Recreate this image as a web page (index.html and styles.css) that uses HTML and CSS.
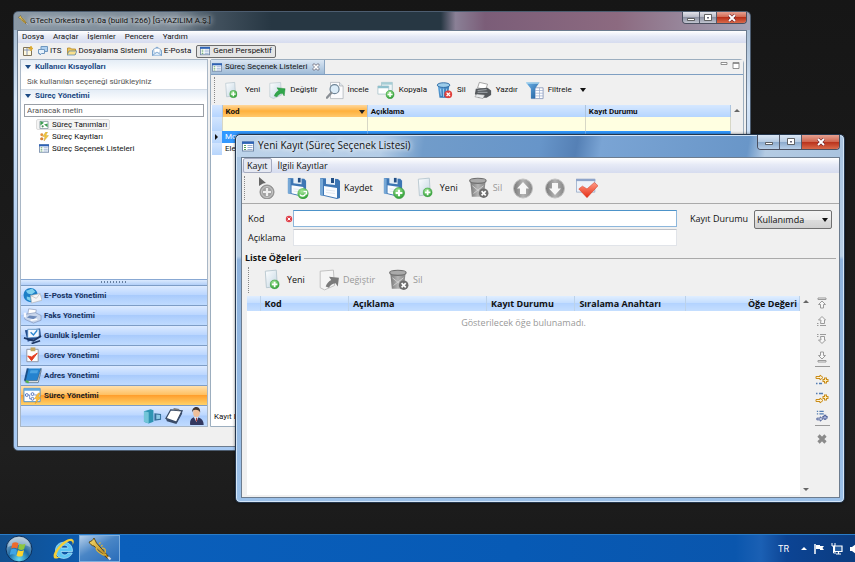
FILE: index.html
```html
<!DOCTYPE html>
<html lang="tr">
<head>
<meta charset="utf-8">
<title>GTech Orkestra</title>
<link rel="stylesheet" href="styles.css">
</head>
<body>
<svg class="defs" aria-hidden="true">
  <defs>
    <linearGradient id="gPage" x1="0" y1="0" x2="1" y2="1"><stop offset="0" stop-color="#fdfeff"/><stop offset="1" stop-color="#c3d6e2"/></linearGradient>
    <linearGradient id="gBlue" x1="0" y1="0" x2="1" y2="1"><stop offset="0" stop-color="#6db3e8"/><stop offset="1" stop-color="#1c5b9c"/></linearGradient>
    <linearGradient id="gGrey" x1="0" y1="0" x2="1" y2="0"><stop offset="0" stop-color="#777"/><stop offset=".5" stop-color="#b4b4b4"/><stop offset="1" stop-color="#858585"/></linearGradient>
    <linearGradient id="gRed" x1="0" y1="0" x2="0" y2="1"><stop offset="0" stop-color="#ff9a85"/><stop offset="1" stop-color="#e62e14"/></linearGradient>
    <linearGradient id="gGold" x1="0" y1="0" x2="1" y2="1"><stop offset="0" stop-color="#f7dc6a"/><stop offset="1" stop-color="#a87410"/></linearGradient>
    <radialGradient id="gGreen" cx=".4" cy=".3" r=".7"><stop offset="0" stop-color="#a6e89a"/><stop offset="1" stop-color="#2f9f35"/></radialGradient>
    <radialGradient id="gOrb" cx=".5" cy=".9" r=".9"><stop offset="0" stop-color="#64dcf5"/><stop offset=".45" stop-color="#1c69a4"/><stop offset="1" stop-color="#a9bfd0"/></radialGradient>
  </defs>
  <symbol id="plus" viewBox="0 0 10 10"><circle cx="5" cy="5" r="4.6" fill="url(#gGreen)" stroke="#3f9e46" stroke-width=".6"/><path d="M5 2.2v5.6M2.2 5h5.6" stroke="#fff" stroke-width="1.7"/></symbol>
  <symbol id="cross" viewBox="0 0 10 10"><circle cx="5" cy="5" r="4.6" fill="#e1403c"/><path d="M3 3l4 4M7 3l-4 4" stroke="#fff" stroke-width="1.6"/></symbol>
  <symbol id="crossGrey" viewBox="0 0 10 10"><circle cx="5" cy="5" r="4.6" fill="#6e6e6e"/><path d="M3 3l4 4M7 3l-4 4" stroke="#fff" stroke-width="1.6"/></symbol>
  <symbol id="trumpet" viewBox="0 0 24 24"><path d="M1 5C4 4 5 3 6 1l2.500 5L21 20l-1.500 1.500L6 9C4 9 2 7 1 5z" fill="url(#gGold)" stroke="#4a3508" stroke-width=".8"/><path d="M9 9c-2 3 0 5 3 7s5 3 6 1M11 7l1.500-1.500M13 9.500l1.500-1.500M14 11c3 0 4 2 3 5" fill="none" stroke="#d8b03a" stroke-width="1.400"/><path d="M20 20l2.500 2.500" stroke="#d9d9d9" stroke-width="2.2"/></symbol>
  <symbol id="list" viewBox="0 0 12 10"><rect x=".5" y=".5" width="11" height="9" fill="#fff" stroke="#7289a8"/><path d="M0 0h12v2.4H0z" fill="#2d62b5"/><path d="M2 4h2M2 6h2M2 8h2" stroke="#58a05b"/><path d="M5.5 4h5M5.5 6h5M5.5 8h5" stroke="#8da6cf" stroke-width=".9"/></symbol>
  <symbol id="newdoc" viewBox="0 0 20 20"><path d="M3 2l10-1 1 15-10 1z" fill="url(#gPage)" stroke="#adbfc9" stroke-width=".7"/><use href="#plus" x="7" y="9.500" width="9" height="9"/></symbol>
  <symbol id="edit" viewBox="0 0 20 20"><path d="M2 2l12-1 1 14-9 4-4-2z" fill="url(#gPage)" stroke="#b7c5cc" stroke-width=".7"/><path d="M7 16c1-3 3-5 5-6l-2-3 9 1-1 8-2-3c-3 0-5 2-6 4z" fill="#31a64b" stroke="#208b38" stroke-width=".5"/></symbol>
  <symbol id="editGrey" viewBox="0 0 20 20"><path d="M2 2l12-1 1 14-9 4-4-2z" fill="#f5f5f5" stroke="#bbb" stroke-width=".8"/><path d="M7 16c1-3 3-5 5-6l-2-3 9 1-1 8-2-3c-3 0-5 2-6 4z" fill="#7b7b7b"/></symbol>
  <symbol id="inspect" viewBox="0 0 20 20"><path d="M5 1h10l4 4v14H5z" fill="#fbfbfd" stroke="#aab0b7" stroke-width=".8"/><path d="M15 1v4h4" fill="#dfe5ec" stroke="#999" stroke-width=".6"/><circle cx="9.500" cy="8.500" r="5" fill="#dcecf8" stroke="#6e8497" stroke-width="1.3"/><path d="M6 12.500L1 18" stroke="#8a8f95" stroke-width="2.6" stroke-linecap="round"/></symbol>
  <symbol id="copy" viewBox="0 0 20 20"><path d="M5 1h12v9H5z" fill="#eef5f7" stroke="#9cbcc5" stroke-width=".8"/><path d="M5 1h12v2.500H5z" fill="#a5cdd5"/><path d="M1 5h12v9H1z" fill="#fff" stroke="#a0bec6" stroke-width=".8"/><path d="M1 5h12v2.500H1z" fill="#8fc1cd"/><use href="#plus" x="9.500" y="9.500" width="10" height="10"/></symbol>
  <symbol id="trash" viewBox="0 0 20 20"><path d="M3 4h13l-2 14H5z" fill="url(#gBlue)"/><ellipse cx="9.500" cy="4" rx="7" ry="2.600" fill="#9cccea" stroke="#2a68a2"/><path d="M6 8l1 8M9.500 8v9M13 8l-1 8" stroke="#a9d5f3"/><use href="#cross" x="10" y="9.500" width="9.500" height="9.500"/></symbol>
  <symbol id="trashGrey" viewBox="0 0 20 20"><path d="M2 3h14l-1.500 15h-11z" fill="url(#gGrey)"/><ellipse cx="9" cy="3.500" rx="7.500" ry="2.300" fill="#aaa" stroke="#707070"/><path d="M4 8l10 8M14 8L5 15" stroke="#d5d5d5" stroke-width=".8"/><use href="#crossGrey" x="9.500" y="10" width="9.500" height="9.500"/></symbol>
  <symbol id="print" viewBox="0 0 20 20"><path d="M6 1l9 2-2 6-9-2z" fill="#fff" stroke="#777" stroke-width=".7"/><path d="M2 8l13-1 4 3v5l-5 3H5l-4-4z" fill="#55595d"/><path d="M4 10l10-1M4 12h11" stroke="#aeb3b8"/><path d="M3 14l9 1-2 4-9-2z" fill="#e6e8ea" stroke="#777" stroke-width=".5"/></symbol>
  <symbol id="filter" viewBox="0 0 20 20"><path d="M6 7h13v12H6z" fill="#fff" stroke="#8f9ebd"/><path d="M6 10h13M6 13h13M6 16h13M10.500 7v12M15 7v12" stroke="#9badd0" stroke-width=".8"/><path d="M0 1h15l-5 7v11H5.500V8z" fill="url(#gBlue)"/><path d="M0 1h15l-1 1.500H1z" fill="#a6d5ee"/></symbol>
  <symbol id="floppy" viewBox="0 0 22 22"><path d="M1 1l18 1 2 2v17l-3 1-17-4z" fill="#3d76b4"/><path d="M1 1l3 1v17l-3-1z" fill="#77a8d6"/><path d="M7 1h9v7l-9-1z" fill="#e6eff8"/><path d="M12 1h3v5h-3z" fill="#234e83"/><path d="M5 9l13 2v10L5 18z" fill="#fafcff"/><path d="M7 13l9 1M7 15.500l9 1" stroke="#d3dce8" stroke-width=".7"/></symbol>
  <symbol id="saveRefresh" viewBox="0 0 22 22"><use href="#floppy" width="20" height="20"/><circle cx="16" cy="16.500" r="5.500" fill="url(#gGreen)"/><path d="M13 17.500c1 2.500 5 2 5.500-1M19.500 17.500v-3h-3" stroke="#fff" stroke-width="1.500" fill="none"/></symbol>
  <symbol id="saveNew" viewBox="0 0 22 22"><use href="#floppy" width="20" height="20"/><use href="#plus" x="10" y="10" width="12" height="12"/></symbol>
  <symbol id="pick" viewBox="0 0 22 22"><path d="M4 0l7 6-3 .5L4 9z" fill="#666"/><circle cx="12" cy="15" r="7" fill="#a2a2a2" stroke="#8b8b8b"/><circle cx="12" cy="15" r="5.500" fill="none" stroke="#d5d5d5" stroke-width=".7"/><path d="M12 11v8M8 15h8" stroke="#eee" stroke-width="2.200"/></symbol>
  <symbol id="up" viewBox="0 0 22 22"><circle cx="11" cy="11.500" r="9.500" fill="url(#gGrey)" stroke="#c2c2c2"/><path d="M11 5l6 6.500h-3V17H8v-5.500H5z" fill="#f7f7f7"/></symbol>
  <symbol id="down" viewBox="0 0 22 22"><circle cx="11" cy="11.500" r="9.500" fill="url(#gGrey)" stroke="#c2c2c2"/><path d="M11 18l6-6.500h-3V6H8v5.500H5z" fill="#f7f7f7"/></symbol>
  <symbol id="confirm" viewBox="0 0 24 22"><path d="M.5 1.500h20v14H.5z" fill="#eef3fa" stroke="#9fb0cc"/><path d="M0 1h21v2.500H0z" fill="#8fa5ca"/><path d="M3 12l4-3 5 3 8-7 4 3.500L12 21.500z" fill="url(#gRed)" stroke="#d73a22" stroke-width=".6"/></symbol>
  <symbol id="globe" viewBox="0 0 20 16"><circle cx="8" cy="7.500" r="7.500" fill="#1c7fc6"/><path d="M3 3c3 0 4-2 7-2l3 3-4 3-4-1zM4 9l4 1v4l-4-2z" fill="#7fd0ef"/><path d="M8 8l10-2 2 7-11 3z" fill="#f4f5f7" stroke="#aaa" stroke-width=".6"/><path d="M8 8l6 3 4-5" stroke="#aaa" stroke-width=".6" fill="none"/></symbol>
  <symbol id="fax" viewBox="0 0 20 16"><path d="M6 1l8 1-1 5H5z" fill="#fff" stroke="#8796b6" stroke-width=".7"/><path d="M1 7l12-2 6 3v5l-8 3-9-4z" fill="#c8d6ec" stroke="#7d91b8" stroke-width=".7"/><path d="M7 8l8 1-4 3-7-2z" fill="#6e8bbb"/><path d="M2 5v5" stroke="#f7f9ff" stroke-width="2.500"/><path d="M8 13l7-1" stroke="#fff" stroke-width="1.500"/></symbol>
  <symbol id="agenda" viewBox="0 0 20 17"><path d="M2 3l16-2 1 9-14 5z" fill="#274e8c"/><path d="M5 2h12v8l-12 1z" fill="#f5faff" stroke="#4684bf" stroke-width=".7"/><path d="M8 5l3 3 4-5" stroke="#2b87d0" stroke-width="1.400" fill="none"/><path d="M1 11l10 3 8-5M9 17l9-3" stroke="#1c3765" stroke-width="1.800" fill="none"/></symbol>
  <symbol id="task" viewBox="0 0 20 17"><path d="M4 2h12v13H4z" fill="#fdfdfd" stroke="#8b96a8"/><path d="M8 0h5v4H8z" fill="#c3a75f"/><path d="M5 9l4 5 6-8-6 4z" fill="#e43d22" stroke="#e43d22"/></symbol>
  <symbol id="book" viewBox="0 0 20 17"><path d="M5 1l14 0-4 13H2z" fill="#2583cf"/><path d="M2 14l13 0 4-13v3l-3 12H3z" fill="#f2f2f2" stroke="#38546d" stroke-width=".7"/><path d="M8 3h8l-1 3H7z" fill="#4ba3e2"/><path d="M5 1L2 14" stroke="#194f88" stroke-width="2"/><path d="M3 14l3 2" stroke="#50b848" stroke-width="2"/></symbol>
  <symbol id="process" viewBox="0 0 20 17"><path d="M1 1h17v14H1z" fill="#fff" stroke="#4d8fc9"/><path d="M1 1h17v2.500H1z" fill="#64a9dc"/><circle cx="4" cy="8" r="1.500" fill="none" stroke="#5172bb"/><circle cx="10" cy="7" r="1.500" fill="none" stroke="#5172bb"/><circle cx="10" cy="12" r="1.500" fill="none" stroke="#5172bb"/><path d="M5.500 8H7v4h1.500M12 8h3" stroke="#5172bb" stroke-width=".8" fill="none"/><path d="M16 6l-4 6h2.500L13 17l6-7h-3l2-4z" fill="#f9bd37" stroke="#d8941b" stroke-width=".5"/></symbol>
  <symbol id="server" viewBox="0 0 20 16"><path d="M1 3l7-2 3 1v12l-5 2-5-2z" fill="#2f95b3"/><path d="M1 3l5 1v12l-5-2z" fill="#73c5d8"/><path d="M12 5l7 1v6l-7 1z" fill="#356e98"/><path d="M14 6.500l4 .5v4l-4 .5z" fill="#8ec9e4"/></symbol>
  <symbol id="pad" viewBox="0 0 20 17"><path d="M6 2l12 1-6 12-11-4z" fill="#fff" stroke="#394b66" stroke-width="1.300"/><path d="M1 11l11 4 6-12v3l-6 11-10-3z" fill="#3a4c69"/><path d="M9 1l6 1" stroke="#777" stroke-width="2"/></symbol>
  <symbol id="person" viewBox="0 0 18 20"><path d="M2 20c-1-6 2-9 6-9s9 2 9 9z" fill="#323860"/><path d="M6 11l3 6 2-6z" fill="#dce6f2"/><path d="M9 12v4" stroke="#b13a34" stroke-width="1.200"/><ellipse cx="9" cy="6.500" rx="3.700" ry="4.700" fill="#efbf99"/><path d="M4 6c0-8 10-8 9 0-1-2-2-3-5-3s-3 1-4 3z" fill="#44362e"/></symbol>
  <symbol id="grid" viewBox="0 0 10 10"><path d="M.5 1.500h8v8h-8z" fill="#fff9df" stroke="#80745a"/><path d="M1 4h8M4 2v7" stroke="#8594b5"/><path d="M8 0v5M5.500 2.500h4.500" stroke="#e1ad2e" stroke-width="1.500"/></symbol>
  <symbol id="talk" viewBox="0 0 10 10"><path d="M3 .5h6.500v5H3z" fill="#aed0f0" stroke="#6f97bf"/><path d="M.5 3.500h6v4h-3L2 9V7.500H.5z" fill="#e7f2fc" stroke="#6f97bf"/></symbol>
  <symbol id="folder" viewBox="0 0 10 10"><path d="M.5 8.500V2h3l1 1h4v5.500z" fill="#ecc65c" stroke="#b58522" stroke-width=".8"/><path d="M2 5h8L8 9H0z" fill="#f9df8c" stroke="#4c81b8" stroke-width=".7"/></symbol>
  <symbol id="mail" viewBox="0 0 10 10"><path d="M.5 4.500L5 1l4.500 3.500v5h-9z" fill="#cfe3f6" stroke="#6292c3" stroke-width=".8"/><path d="M2 2.500h6V6L5 8 2 6z" fill="#fff" stroke="#8baacb" stroke-width=".5"/><path d="M.5 9.500L5 6l4.500 3.500" fill="#dcebf9" stroke="#6292c3" stroke-width=".7"/></symbol>
  <symbol id="define" viewBox="0 0 10 10"><path d="M.5 1.500h9v8h-9z" fill="#fff" stroke="#8da0a8"/><path d="M1 1l4 2-4 3zM5 5l4-1v4z" fill="#3a9e50"/><circle cx="3.500" cy="7" r="1.200" fill="#4b8d5b"/></symbol>
  <symbol id="records" viewBox="0 0 10 10"><circle cx="2.500" cy="3" r="1.600" fill="#e59139"/><circle cx="2.500" cy="7.500" r="1.800" fill="#d98236"/><path d="M7 0L3.500 5H6L5 10l5-6H7l2-4z" fill="#f3c73c" stroke="#b8902b" stroke-width=".4"/></symbol>
  <symbol id="toTop" viewBox="0 0 12 12"><path d="M2 1h8v1.500H2z"/><path d="M6 4l3.500 3.500h-2V11h-3V7.500h-2z"/></symbol>
  <symbol id="stepUp" viewBox="0 0 12 12"><path d="M6 1.500l3.500 3.500H8.500v3.500h-4L5 5H2.500z"/><path d="M1 10.500h1.500M4 10.500h6M1 8.500h1.500"/></symbol>
  <symbol id="addAbove" viewBox="0 0 14 12"><path d="M1 2.500h4V1l3 2.500L5 6V4.500H1z" fill="#fff3d5" stroke="#ca8c18"/><path d="M10.500 3.500v6M7.500 6.500h6" stroke="#ca8c18" stroke-width="3"/><path d="M10.500 4.500v4M8.500 6.500h4" stroke="#fff0c0"/><path d="M1 9.500h1.500M4 9.500h3" stroke="#537db3" stroke-width="1.500"/></symbol>
  <symbol id="addBelow" viewBox="0 0 14 12"><path d="M1 1.500h1.500M4 1.500h4" stroke="#537db3" stroke-width="1.500"/><path d="M1 7.500h4V6l3 2.500L5 11V9.500H1z" fill="#fff3d5" stroke="#ca8c18"/><path d="M10.500 2.500v6M7.500 5.500h6" stroke="#ca8c18" stroke-width="3"/><path d="M10.500 3.500v4M8.500 5.500h4" stroke="#fff0c0"/></symbol>
  <symbol id="addEnd" viewBox="0 0 14 14"><path d="M1 1.500h1.500M4 1.500h5M1 4.500h1.500M4 4.500h5" stroke="#537db3" stroke-width="1.500"/><path d="M1 9.500h4V8l3 2.500L5 13v-1.500H1z" fill="#e4e9fa" stroke="#40548f"/><path d="M10.500 5.500v6M7.500 8.500h6" stroke="#40548f" stroke-width="3"/><path d="M10.500 6.500v4M8.500 8.500h4" stroke="#c3cdf0"/></symbol>
</svg>

<main class="desktop">
  <section class="window main-window" aria-label="GTech Orkestra">
    <header class="titlebar">
      <svg class="app-icon"><use href="#trumpet"/></svg>
      <h1>GTech Orkestra v1.0a (build 1266) [G-YAZILIM A.Ş.]</h1>
      <div class="caption">
        <button aria-label="Simge durumuna küçült"><svg viewBox="0 0 12 10"><path d="M2.500 5.500h7v2h-7z" fill="#fff" stroke="#444" stroke-width=".8"/></svg></button>
        <button aria-label="Ekranı kapla"><svg viewBox="0 0 12 10"><path d="M2.500 1.500h7v6h-7z" fill="#fff" stroke="#444" stroke-width=".8"/><path d="M5 4h2v1.500H5z" fill="#667"/></svg></button>
        <button class="close" aria-label="Kapat"><svg viewBox="0 0 12 10"><path d="M3 2l6 6M9 2L3 8" stroke="#512" stroke-width="3"/><path d="M3 2l6 6M9 2L3 8" stroke="#fff" stroke-width="2"/></svg></button>
      </div>
    </header>
    <div class="client">
      <nav class="menubar"><a href="#">Dosya</a><a href="#">Araçlar</a><a href="#">İşlemler</a><a href="#">Pencere</a><a href="#">Yardım</a></nav>
      <div class="perspectives">
        <button aria-label="Perspektif aç"><svg><use href="#grid"/></svg></button>
        <button><svg><use href="#talk"/></svg>ITS</button>
        <button><svg><use href="#folder"/></svg>Dosyalama Sistemi</button>
        <button><svg><use href="#mail"/></svg>E-Posta</button>
        <button class="pressed"><svg><use href="#list"/></svg>Genel Perspektif</button>
      </div>
      <div class="workspace">
        <aside class="sidebar">
          <h2>Kullanıcı Kısayolları</h2>
          <p class="hint">Sık kullanılan seçeneği sürükleyiniz</p>
          <h2>Süreç Yönetimi</h2>
          <input class="search" type="text" aria-label="Aranacak metin" placeholder="Aranacak metin">
          <ul class="tree">
            <li><a class="current" href="#"><svg><use href="#define"/></svg>Süreç Tanımları</a></li>
            <li><a href="#"><svg><use href="#records"/></svg>Süreç Kayıtları</a></li>
            <li><a href="#"><svg><use href="#list"/></svg>Süreç Seçenek Listeleri</a></li>
          </ul>
          <div class="sash"></div>
          <nav class="stack">
            <button><svg><use href="#globe"/></svg>E-Posta Yönetimi</button>
            <button><svg><use href="#fax"/></svg>Faks Yönetimi</button>
            <button><svg><use href="#agenda"/></svg>Günlük İşlemler</button>
            <button><svg><use href="#task"/></svg>Görev Yönetimi</button>
            <button><svg><use href="#book"/></svg>Adres Yönetimi</button>
            <button class="active"><svg><use href="#process"/></svg>Süreç Yönetimi</button>
          </nav>
          <div class="shortcuts">
            <button aria-label="Sunucu"><svg><use href="#server"/></svg></button>
            <button aria-label="Notlar"><svg><use href="#pad"/></svg></button>
            <button aria-label="Kullanıcı"><svg><use href="#person"/></svg></button>
          </div>
        </aside>
        <section class="editor">
          <div class="tabs">
            <button class="tab"><svg><use href="#list"/></svg>Süreç Seçenek Listeleri<svg class="tab-close" viewBox="0 0 8 8"><path d="M1 1h2l1 1.500L5 1h2v1.500L5.500 4 7 5.500V7H5L4 5.500 3 7H1V5.500L2.500 4 1 2.500z" fill="#fff" stroke="#667" stroke-width=".7"/></svg></button>
            <div class="view-tools"><button aria-label="Küçült"><svg viewBox="0 0 8 8"><path d="M1 1.500h6v2H1z" fill="#fff" stroke="#777" stroke-width=".8"/></svg></button><button aria-label="Büyüt"><svg viewBox="0 0 8 8"><path d="M1 1.500h6v6H1zM1 2.500h6" fill="#fff" stroke="#777" stroke-width=".8"/></svg></button></div>
          </div>
          <div class="toolbar">
            <button><svg><use href="#newdoc"/></svg>Yeni</button>
            <button><svg><use href="#edit"/></svg>Değiştir</button>
            <button><svg><use href="#inspect"/></svg>İncele</button>
            <button><svg><use href="#copy"/></svg>Kopyala</button>
            <button><svg><use href="#trash"/></svg>Sil</button>
            <button><svg><use href="#print"/></svg>Yazdır</button>
            <button><svg><use href="#filter"/></svg>Filtrele<i class="arrow"></i></button>
          </div>
          <div class="grid-area">
            <table class="records">
              <colgroup><col class="marker"><col class="c-code"><col><col class="c-state"></colgroup>
              <thead><tr><th></th><th class="sorted">Kod</th><th>Açıklama</th><th>Kayıt Durumu</th></tr></thead>
              <tbody>
                <tr class="filter-row"><td></td><td></td><td></td><td></td></tr>
                <tr class="selected"><td><i class="pointer"></i></td><td>Model</td><td></td><td></td></tr>
                <tr><td></td><td>Eleme</td><td></td><td></td></tr>
              </tbody>
            </table>
            <div class="scroll"><i class="tri-up"></i></div>
          </div>
          <p class="count">Kayıt Listesi</p>
        </section>
      </div>
    </div>
  </section>

  <section class="window dialog" role="dialog" aria-label="Yeni Kayıt">
    <header class="titlebar">
      <svg class="app-icon"><use href="#list"/></svg>
      <h1>Yeni Kayıt (Süreç Seçenek Listesi)</h1>
      <div class="caption">
        <button aria-label="Simge durumuna küçült"><svg viewBox="0 0 12 10"><path d="M2.500 5.500h7v2h-7z" fill="#fff" stroke="#444" stroke-width=".8"/></svg></button>
        <button aria-label="Ekranı kapla"><svg viewBox="0 0 12 10"><path d="M2.500 1.500h7v6h-7z" fill="#fff" stroke="#444" stroke-width=".8"/><path d="M5 4h2v1.500H5z" fill="#667"/></svg></button>
        <button class="close" aria-label="Kapat"><svg viewBox="0 0 12 10"><path d="M3 2l6 6M9 2L3 8" stroke="#512" stroke-width="3"/><path d="M3 2l6 6M9 2L3 8" stroke="#fff" stroke-width="2"/></svg></button>
      </div>
    </header>
    <div class="client">
      <nav class="menubar"><a class="open" href="#">Kayıt</a><a href="#">İlgili Kayıtlar</a></nav>
      <div class="toolbar">
        <button aria-label="Seç"><svg><use href="#pick"/></svg></button>
        <button aria-label="Kaydet ve yenile"><svg><use href="#saveRefresh"/></svg></button>
        <button><svg><use href="#floppy"/></svg>Kaydet</button>
        <button aria-label="Kaydet ve yeni"><svg><use href="#saveNew"/></svg></button>
        <button><svg><use href="#newdoc"/></svg>Yeni</button>
        <button disabled><svg><use href="#trashGrey"/></svg>Sil</button>
        <button aria-label="Önceki"><svg><use href="#up"/></svg></button>
        <button aria-label="Sonraki"><svg><use href="#down"/></svg></button>
        <button aria-label="Onayla"><svg><use href="#confirm"/></svg></button>
      </div>
      <form class="form">
        <label for="kod">Kod</label>
        <svg class="error" viewBox="0 0 8 8"><circle cx="4" cy="4" r="3.200" fill="#e0424c"/><path d="M2.600 2.600l2.800 2.800M5.400 2.600L2.600 5.400" stroke="#fff"/></svg>
        <input id="kod" class="focused" type="text">
        <label class="state-label" for="durum">Kayıt Durumu</label>
        <span class="select"><select id="durum"><option>Kullanımda</option></select><i class="arrow"></i></span>
        <label for="aciklama">Açıklama</label>
        <input id="aciklama" class="second" type="text">
      </form>
      <h2 class="group">Liste Öğeleri</h2>
      <div class="toolbar items-tools">
        <button><svg><use href="#newdoc"/></svg>Yeni</button>
        <button disabled><svg><use href="#editGrey"/></svg>Değiştir</button>
        <button disabled><svg><use href="#trashGrey"/></svg>Sil</button>
      </div>
      <div class="items">
        <div class="items-list">
          <table>
            <colgroup><col class="i-mark"><col class="i-code"><col class="i-desc"><col class="i-state"><col class="i-sort"><col></colgroup>
            <thead><tr><th></th><th>Kod</th><th>Açıklama</th><th>Kayıt Durumu</th><th>Sıralama Anahtarı</th><th class="num">Öğe Değeri</th></tr></thead>
          </table>
          <p class="empty">Gösterilecek öğe bulunamadı.</p>
        </div>
        <div class="scroll"><i class="tri-up"></i><i class="tri-down"></i></div>
        <div class="side-tools">
          <button aria-label="En üste taşı"><svg class="outline"><use href="#toTop"/></svg></button>
          <button aria-label="Yukarı taşı"><svg class="outline"><use href="#stepUp"/></svg></button>
          <button aria-label="Aşağı taşı"><svg class="outline flip"><use href="#stepUp"/></svg></button>
          <button aria-label="En alta taşı"><svg class="outline flip"><use href="#toTop"/></svg></button>
          <hr>
          <button aria-label="Üste ekle"><svg><use href="#addAbove"/></svg></button>
          <button aria-label="Alta ekle"><svg><use href="#addBelow"/></svg></button>
          <button aria-label="Sona ekle"><svg><use href="#addEnd"/></svg></button>
          <hr>
          <button aria-label="Kaldır"><svg viewBox="0 0 12 12"><path d="M2.500 2.500l7 7M9.500 2.500l-7 7" stroke="#8b8b8b" stroke-width="3.200"/></svg></button>
        </div>
      </div>
    </div>
  </section>

  <footer class="taskbar">
    <button class="start" aria-label="Başlat"><svg viewBox="0 0 28 28"><circle cx="14" cy="14" r="13" fill="url(#gOrb)" stroke="#0b2f5c"/><path d="M3 12a11 10 0 0 1 22 0c-5-3-16-3-22 0z" fill="#fff" opacity=".35"/><path d="M7.500 8c2-1 4-1 6 .3l-1.300 5.400c-2-1.200-4-1.200-6-.3z" fill="#ee6a2b"/><path d="M14.500 8.800c2 1 4 1 6 0l-1.400 5.500c-2 1-4 .8-6-.2z" fill="#8dc63f"/><path d="M6 14.500c2-1 4-1 6 .2L10.600 20c-2-1-4-1-6 0z" fill="#3fa5e4"/><path d="M13 15.300c2 1 4 1 6 0L17.500 21c-2 1-4 .7-6-.3z" fill="#fdd42e"/></svg></button>
    <button class="ie" aria-label="Internet Explorer"><svg viewBox="0 0 24 24"><path fill-rule="evenodd" d="M20.500 14.500H9c.5 4 5.500 4.500 7 1.500h4.200C17 24 3.500 23 3.500 13.500c0-11 17.500-11.500 17 1zM9 11h7c-.5-4-6.500-3.500-7 0z" fill="#5cc6f3" stroke="#b7ebff" stroke-width=".7"/><path d="M3 21.500C-3 19 12 0 20 2c2.500.8 2 4 .5 6 .5-2.500 0-4-2-4C13 4 1 18 5.500 20c1 .4 2 0 3-.6-1.500 1.500-3.500 2.500-5.500 2.100z" fill="#f5cf37"/></svg></button>
    <button class="task" aria-label="GTech Orkestra"><svg><use href="#trumpet"/></svg></button>
    <div class="tray">
      <span>TR</span>
      <i class="tri-up"></i>
      <svg viewBox="0 0 12 12"><path d="M2 1v10" stroke="#fff" stroke-width="1.500"/><path d="M3 2h4v1h4l-1.500 2L11 7H7V6H3z" fill="#fff"/></svg>
      <svg viewBox="0 0 12 12"><path d="M3.500 3h7.500v5.500H3.500zM5 11h5M7.500 8.500V11" fill="#245a9c" stroke="#fff" stroke-width="1.200"/><path d="M1 0v3h3V0M2.500 3v7H5" fill="none" stroke="#fff"/></svg>
      <svg viewBox="0 0 12 12"><path d="M1 4h2l4-3v10L3 8H1z" fill="#fff"/><path d="M9 3c1.500 2 1.500 4 0 6" stroke="#fff" fill="none"/></svg>
    </div>
  </footer>
</main>
</body>
</html>
```
FILE: styles.css
```css
* { box-sizing: border-box; }
html, body { height: 100%; }
body {
  margin: 0;
  overflow: hidden;
  font: 8px/12px Roboto, "Noto Sans", sans-serif;
  color: #111;
}
h1, h2, p, ul, form { margin: 0; padding: 0; font-weight: normal; }
button, input, select { font: inherit; color: inherit; margin: 0; }
button { display: inline-flex; align-items: center; padding: 0; border: 0; background: none; white-space: nowrap; }
a { color: inherit; text-decoration: none; }
table { border-collapse: collapse; table-layout: fixed; width: 100%; }
th, td { padding: 0 0 0 3px; text-align: left; white-space: nowrap; overflow: hidden; }
svg { flex: none; display: block; }
.defs { position: absolute; width: 0; height: 0; }

.desktop {
  position: relative;
  height: 100%;
  display: flex;
  flex-direction: column;
  justify-content: flex-end;
  background: linear-gradient(#161616, #1f1f1f 80%, #191919);
}

/* Windows */
.window {
  position: absolute;
  display: flex;
  flex-direction: column;
  border: 1px solid #4d5d70;
  border-radius: 5px;
}
.main-window {
  inset: 11px 104px 111px 13px;
  padding: 0 3px 3px;
  background:
    linear-gradient(90deg, #8a98a5 0, #7b8995 22%, #43525f 27%, #273743 35%, #273743 58%, #8a8096 60%, #7b5d78 64%, #8c6a80 82%, #a3a3b6 100%) top / 100% 18px no-repeat,
    linear-gradient(#9db3ca, #d5e5f7 20%, #a9c8ef 60%, #a8caf3);
}
.dialog {
  inset: 134px 10px 59px 235px;
  padding: 0 4px 4px 5px;
  font-family: "Open Sans", "Noto Sans", sans-serif;
  font-size: 9px;
  border-color: #24364c;
  box-shadow: inset 0 0 0 1px #d4e6f8, 0 0 3px #0008;
  background:
    linear-gradient(100deg, #bdd3ea 0, #b4cde7 24%, #719cca 31%, #6795c9 50%, #5580b5 56%, #7aa4d4 60%, #6996c8 84%, #b4cbe3 87%, #a9c3df) top / 100% 22px no-repeat,
    linear-gradient(#a6c3e2, #b9cfe5 33%, #8eb2dc 34%, #9bc0e8);
}
.titlebar { display: flex; align-items: flex-start; flex: none; }
.main-window .titlebar { height: 18px; }
.dialog .titlebar { height: 22px; }
.titlebar h1 { flex: 1; line-height: 17px; font-size: inherit; text-shadow: 0 0 5px #fff, 0 0 6px #fff; }
.dialog .titlebar h1 { font-size: 10px; line-height: 21px; }
.app-icon { width: 10px; height: 10px; margin: 3px 2px 0 1px; }
.dialog .app-icon { width: 12px; height: 11px; margin: 6px 4px 0 1px; }
.caption { display: flex; border: 1px solid #4a4f5f; border-top: 0; border-radius: 0 0 4px 4px; overflow: hidden; }
.caption button { justify-content: center; width: 17px; height: 11px; background: linear-gradient(#e3e3ea, #b5b7c4 48%, #8d91a3 50%, #c0c4cf); border-right: 1px solid #555b6b; }
.caption svg { width: 12px; height: 10px; }
.caption .close { width: 29px; border: 0; background: linear-gradient(#e6a192, #d0664f 48%, #b8301a 50%, #d96a4a); }
.dialog .caption button { width: 22px; height: 14px; background: linear-gradient(#dae6f4, #b6cbe2 48%, #8aa9cb 50%, #b8cfe8); }
.dialog .caption .close { width: 37px; background: linear-gradient(#e6a192, #d0664f 48%, #b8301a 50%, #d96a4a); }
.client { flex: 1; min-height: 0; display: flex; flex-direction: column; border: 1px solid #6c7c8f; background: #f0f0f0; }
.menubar { display: flex; flex: none; gap: 9px; padding: 0 4px; height: 12px; background: linear-gradient(#fff, #e6eaf6 45%, #d6dcef); }
.dialog .menubar { height: 15px; gap: 2px; padding: 0 1px; line-height: 15px; }
.dialog .menubar a { padding: 0 3px; border: 1px solid transparent; line-height: 13px; }
.dialog .menubar .open { border-color: #a5abc0; border-radius: 2px; background: #e5e8f2; }

/* Main window body */
.perspectives { display: flex; align-items: center; flex: none; gap: 5px; height: 16px; padding-left: 5px; }
.perspectives button { gap: 2px; height: 13px; }
.perspectives svg { width: 10px; height: 10px; }
.perspectives .pressed { padding: 0 3px; gap: 3px; border: 1px solid #6d6d6d; border-radius: 2px; background: #e5e5e5; }
.workspace { flex: 1; min-height: 0; display: flex; gap: 2px; padding: 0 2px 19px; }
.sidebar { flex: none; width: 188px; display: flex; flex-direction: column; border: 1px solid #a9b7c6; background: #fff; }
.sidebar h2 { display: flex; align-items: center; gap: 4px; height: 13px; padding-left: 4px; font-size: 8px; font-weight: 700; color: #1b4a85; background: linear-gradient(#e4edf6, #fff); }
.hint + h2 { border-top: 1px solid #d3dce6; }
.sidebar h2::before { content: ""; border: 3px solid transparent; border-top: 4px solid #1b4a85; border-bottom: 0; }
.hint { padding: 3px 6px 1px; color: #555; }
.search { height: 13px; margin: 2px 3px 2px; padding: 0 2px; border: 1px solid #9a9fa6; background: #fff; }
.search::placeholder { color: #555; opacity: 1; }
.tree { flex: 1; padding-left: 15px; list-style: none; }
.tree li { height: 11px; margin-bottom: 1px; display: flex; }
.tree a { display: flex; align-items: center; gap: 3px; padding: 0 2px; border: 1px solid transparent; line-height: 9px; }
.tree svg { width: 10px; height: 9px; }
.tree .current { border-color: #ddd; border-radius: 2px; background: #f4f4f4; }
.sash {
  flex: none;
  height: 6px;
  padding: 0 79px;
  border-top: 1px solid #88a8d3;
  background-image: radial-gradient(circle, #667fa0 1px, transparent 1px), linear-gradient(#e4efff, #b2cff8);
  background-size: 3px 4px, auto;
  background-repeat: repeat-x;
  background-origin: content-box, border-box;
  background-clip: content-box, border-box;
}
.stack { display: grid; flex: none; grid-auto-rows: 20px; border-bottom: 1px solid #7e9dc6; }
.stack button { gap: 2px; padding-left: 2px; font-weight: 700; color: #16325f; border-top: 1px solid #7e9dc6; background: linear-gradient(#dceaff, #bcd7ff 45%, #a9cbfc 50%, #c0dbff); }
.stack svg { width: 19px; height: 17px; }
.stack .active { color: #222; background: linear-gradient(#ffe0ac, #ffc163 45%, #ff9f2d 50%, #ffd269); }
.shortcuts { display: flex; flex: none; justify-content: flex-end; gap: 3px; height: 20px; padding-right: 1px; background: linear-gradient(#dceaff, #bcd7ff 45%, #a9cbfc 50%, #c0dbff); }
.shortcuts svg { width: 19px; height: 18px; }
.editor { flex: 1; min-width: 0; display: flex; flex-direction: column; border: 1px solid #9caebf; border-radius: 2px 4px 0 0; background: #fff; }
.tabs { display: flex; flex: none; justify-content: space-between; height: 15px; border-bottom: 1px solid #7f9fc2; background: #f0f0f0; }
.tab { gap: 3px; padding: 0 4px 0 1px; border-right: 1px solid #8ba5c1; background: linear-gradient(#dae6f3, #9fbbd7); }
.tab > svg { width: 10px; height: 9px; }
.tab .tab-close { width: 8px; height: 8px; margin-left: 2px; }
.view-tools { display: flex; gap: 4px; padding: 1px 3px; align-items: flex-start; }
.view-tools svg { width: 8px; height: 8px; }
.toolbar { display: flex; flex: none; align-items: center; background: #f0f0f0; }
.toolbar::before { content: ""; align-self: stretch; margin: 2px 0; border-left: 1px dotted #888; }
.toolbar button:disabled { color: #999; }
.editor .toolbar { gap: 8px; height: 30px; padding-left: 3px; }
.editor .toolbar button { gap: 4px; }
.editor .toolbar svg { width: 18px; height: 19px; }
.arrow { border: 3px solid transparent; border-top: 4px solid #111; border-bottom: 0; }
.editor .toolbar .arrow { margin-left: 4px; }
.grid-area { flex: 1; min-height: 0; display: flex; padding-left: 1px; align-items: flex-start; }
.marker { width: 10px; }
.c-code, .c-state { width: 28%; }
.records th { height: 12px; line-height: 11px; font-weight: 700; border-right: 1px solid #adc5df; background: linear-gradient(#d5e7ff, #b5d5ff); }
.records .sorted { background: linear-gradient(#ffd79b, #ffb13d 50%, #ffc86c); }
.sorted::after { content: ""; float: right; margin: 4px 2px 0; border: 3px solid transparent; border-top: 4px solid #222; border-bottom: 0; }
.records td { height: 12px; }
.records td:first-child { background: linear-gradient(#d2e5fe, #b7d5fc); }
.records .filter-row td { height: 14px; border-right: 1px solid #d7d7c6; }
.filter-row td + td { background: #ffffe1; }
.records .selected td + td { color: #fff; background: #3399ff; border-right: 1px solid #69b4ff; }
.pointer { display: block; width: 0; border: 3px solid transparent; border-left: 3px solid #111; border-right: 0; }
.scroll { flex: none; align-self: stretch; display: flex; flex-direction: column; justify-content: space-between; align-items: center; width: 12px; padding: 4px 0; background: #f0f0f0; }
.tri-up { border: 3px solid transparent; border-bottom: 3px solid #666; border-top: 0; }
.tri-down { border: 3px solid transparent; border-top: 3px solid #666; border-bottom: 0; }
.count { padding: 0 3px 3px; }

/* Dialog body */
.dialog .toolbar { flex: none; gap: 10px; height: 31px; padding-left: 2px; border-bottom: 1px solid #aaa; }
.dialog .toolbar::before { margin: 3px 0; }
.dialog .toolbar button { gap: 3px; }
.dialog .toolbar svg { width: 22px; height: 22px; }
.form { display: grid; flex: none; grid-template-columns: 37px 8px minmax(0, 1fr) auto 78px; grid-auto-rows: 17px; row-gap: 2px; align-items: center; padding: 6px 7px 6px 6px; }
.form input { height: 17px; width: 100%; padding: 0 2px; border: 1px solid #e1e4e9; border-top-color: #bfc2c8; background: #fff; }
.form .focused { border-color: #8db7dc; border-top-color: #4d93c9; outline: 0; }
.form .second { grid-column: 3; }
.error { width: 8px; height: 8px; }
.state-label { margin: 0 6px 0 13px; }
.select { position: relative; align-self: start; height: 19px; }
.select select { width: 100%; height: 19px; padding: 0 2px; appearance: none; border: 1px solid #707070; border-radius: 2px; background: linear-gradient(#f3f3f3, #ebebeb 50%, #ddd 50%, #d0d0d0); }
.select .arrow { position: absolute; right: 4px; top: 8px; }
.group { display: flex; align-items: center; gap: 3px; flex: none; padding: 0 3px; font-size: 9px; font-weight: 700; }
.group::after { content: ""; flex: 1; border-top: 1px solid #aaa; }
.dialog .items-tools { gap: 13px; height: 32px; padding-left: 6px; border: 0; }
.items { flex: 1; min-height: 0; display: flex; padding: 0 7px 2px 5px; }
.items-list { flex: 1; min-width: 0; background: #fff; }
.items th { height: 15px; padding-left: 4px; font-weight: 700; border-right: 1px solid #bcd2ea; background: linear-gradient(#e0eeff, #c5deff 45%, #b3d3ff 50%, #c5deff); }
.items .num { text-align: right; padding-right: 2px; }
.i-mark { width: 13px; }
.i-code, .i-state { width: 16%; }
.i-desc { width: 25%; }
.i-sort { width: 20%; }
.empty { padding-top: 6px; text-align: center; color: #999; }
.side-tools { flex: none; display: flex; flex-direction: column; align-items: center; gap: 6px; width: 20px; padding-top: 1px; }
.side-tools svg { width: 14px; height: 12px; }
.side-tools hr { width: 15px; margin: -3px 0 1px; border: 0; border-top: 1px solid #999; }
.outline { fill: #f7f7f7; stroke: #9a9a9a; stroke-width: 1; }
.flip { transform: scaleY(-1); }

/* Taskbar */
.taskbar { display: flex; flex: none; align-items: center; height: 28px; padding-left: 5px; border-top: 1px solid #2a7cc8; background: linear-gradient(90deg, #12508f, #0a5fbb 14%, #075ab5 60%, #0a56ad 86%, #1b60b4 89%, #0c4494 92%, #0b3c80); }
.start svg { width: 28px; height: 28px; }
.ie { margin-left: 19px; }
.ie svg { width: 24px; height: 24px; }
.task { justify-content: center; width: 41px; height: 27px; margin-left: 3px; border: 1px solid #7eaede; background: linear-gradient(150deg, #b4cfea, #4a86c6 45%, #2a6dba); }
.task svg { width: 24px; height: 24px; }
.tray { display: flex; align-items: center; gap: 6px; margin: 0 -6px 0 auto; color: #fff; font-size: 9px; }
.tray span { margin-right: 6px; }
.tray .tri-up { border-bottom-color: #fff; }
.tray svg { width: 12px; height: 12px; }
```
